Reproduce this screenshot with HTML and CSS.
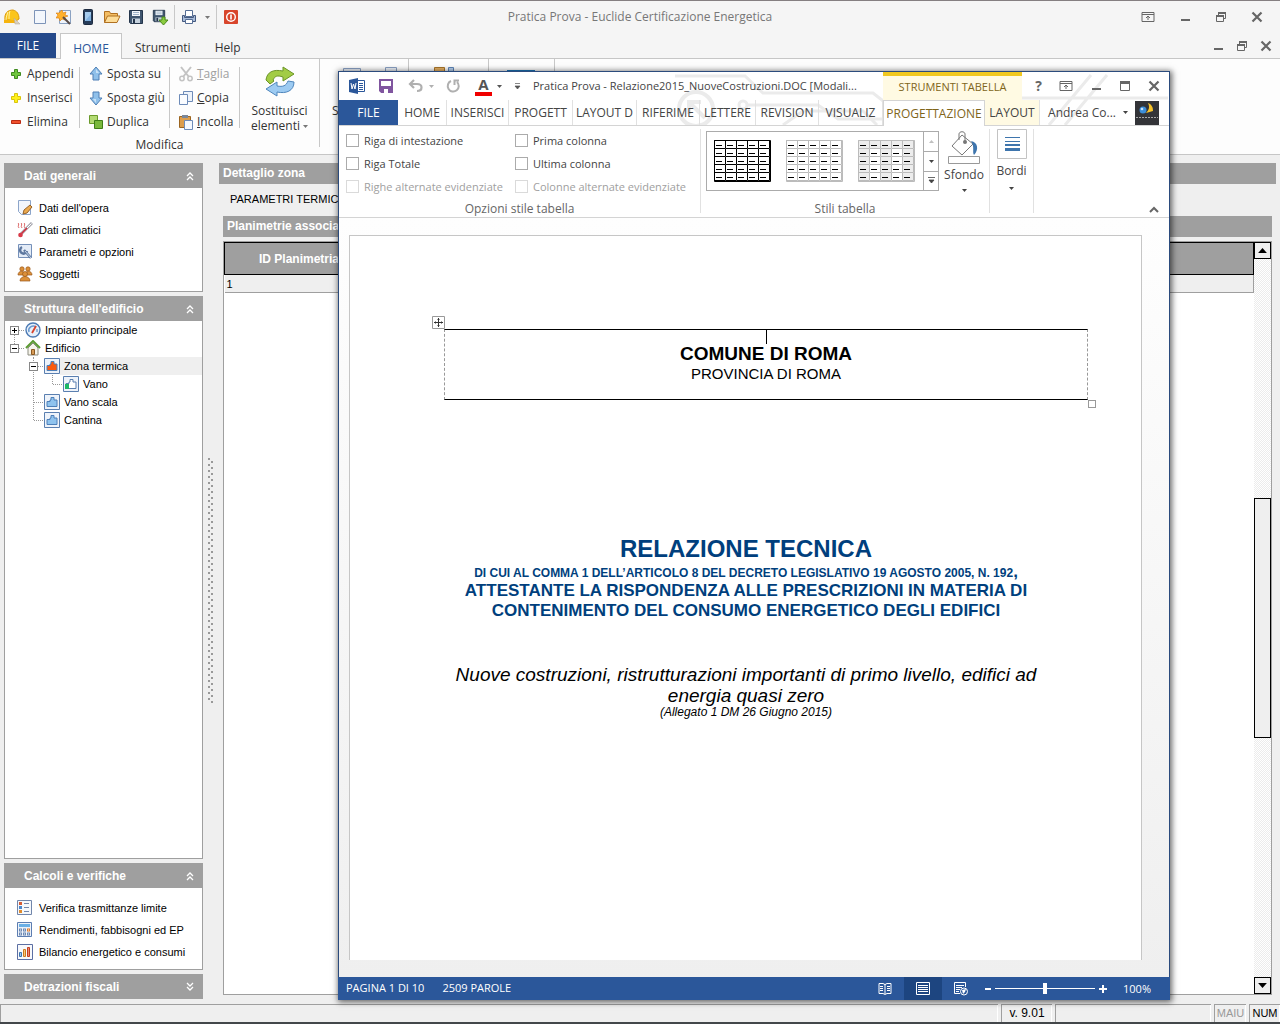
FILE: index.html
```html
<!DOCTYPE html>
<html lang="it">
<head>
<meta charset="UTF-8">
<title>Pratica Prova - Euclide Certificazione Energetica</title>
<meta name="viewport" content="width=device-width, initial-scale=1.0">
<link rel="stylesheet" href="styles.css">
</head>
<body>

<!-- simboli riutilizzati -->
<svg class="simboli" aria-hidden="true">
    <symbol id="giu" viewBox="0 0 7 4"><path d="M0 0h7L3.5 4z" fill="currentColor"/></symbol>
    <symbol id="su" viewBox="0 0 7 4"><path d="M0 4h7L3.5 0z" fill="currentColor"/></symbol>
    <symbol id="chiudi" viewBox="0 0 12 12"><path d="M1.5 1.5l9 9M10.5 1.5l-9 9" stroke="currentColor" stroke-width="2.2" fill="none"/></symbol>
    <symbol id="riduci" viewBox="0 0 12 12"><path d="M2 8h9v2H2z" fill="currentColor"/></symbol>
    <symbol id="ripristina" viewBox="0 0 12 12"><path d="M3.5 4V1.5h7v6H8M1.5 4.5h7v6h-7z" fill="none" stroke="currentColor"/><path d="M3 1h8v2H3zM1 4h8v2H1z" fill="currentColor"/></symbol>
    <symbol id="ingrandisci" viewBox="0 0 12 12"><path d="M1.5 1.5h9v9h-9z" fill="none" stroke="currentColor"/><path d="M1 1h10v3H1z" fill="currentColor"/></symbol>
    <symbol id="barra" viewBox="0 0 14 12"><path d="M1 1.5h12v9H1zM1 3.5h12M7 9V5M5 7l2-2 2 2" fill="none" stroke="currentColor"/></symbol>
    <symbol id="freccesu" viewBox="0 0 10 10"><path d="M2 5l3-3 3 3M2 9l3-3 3 3" fill="none" stroke="currentColor" stroke-width="1.3"/></symbol>
    <symbol id="freccegiu" viewBox="0 0 10 10"><path d="M2 1l3 3 3-3M2 5l3 3 3-3" fill="none" stroke="currentColor" stroke-width="1.3"/></symbol>
    <symbol id="croce" viewBox="0 0 12 12"><path d="M4.5 1.5h3v3h3v3h-3v3h-3v-3h-3v-3h3z" stroke="currentColor"/></symbol>
    <symbol id="freccia" viewBox="0 0 16 16"><path d="M8 1l6 7h-3v6H5V8H2z" fill="#8fc0ea" stroke="#4f7fb5"/><path d="M8 3l3 4H8z" fill="#c9e2f7"/></symbol>
    <symbol id="vano" viewBox="0 0 16 16"><path d="M.5.5h15v15H.5z" fill="#eef3fa" stroke="#5a7fb0"/><path d="M3 12.5V7.5h3V6h1V3.5h3V6h3v6.5z" fill="currentColor" stroke="#4d7fb8"/></symbol>
    <symbol id="floppy" viewBox="0 0 16 16"><path d="M1.5 1.5h13v13h-12l-1-1z" fill="#3f556f" stroke="#24354b"/><path d="M4 2h8v5H4z" fill="#f2f6fa"/><path d="M5 3.5h6M5 5.5h6" stroke="#9fb2c8"/><path d="M4 9.5h8V14H4z" fill="#c6d2de"/><path d="M5 10h2v4H5z" fill="#24354b"/></symbol>
    <pattern id="celle" width="11" height="8" patternUnits="userSpaceOnUse"><path d="M.5 8V.5H11" fill="none" stroke="#000"/><path d="M2 5.5h6" stroke="#000"/></pattern>
    <pattern id="celleGrigie" width="11" height="8" patternUnits="userSpaceOnUse"><path d="M.5 8V.5H11" fill="none" stroke="#bbb"/><path d="M2 5.5h6" stroke="#000"/></pattern>
</svg>

<header class="titolo">
    <div class="accesso">
        <svg class="casco" width="18" height="18" viewBox="0 0 18 18"><path d="M2 12C1 5 5 2 10 2c4 1 6 4 6 9l-3 2-8-1z" fill="#fbc51b" stroke="#dc9a0a"/><path d="M7 3c-1 3-1 5-1 8M5 4C4 7 3 9 3 12" stroke="#fff0a0" fill="none"/><path d="M1 12h10l2 3H1z" fill="#f6b40d"/><path d="M11 10l6 6h-5z" fill="#d8cfc0" stroke="#b5a995" stroke-width=".5"/></svg>
        <button aria-label="Nuovo"><svg width="16" height="16" viewBox="0 0 16 16"><path d="M2.5 1.5h11v13h-11z" fill="#f3f7fc" stroke="#7d94b8"/></svg></button>
        <button aria-label="Creazione guidata"><svg width="16" height="16" viewBox="0 0 16 16"><path d="M3.5 1.5h11v13h-11z" fill="#eff4fb" stroke="#8ba2c2"/><path d="M6 1l1 3 3-1-1 3 3 1-3 1 0 3-3-1-2 2-1-3-3 0 2-3-2-2 3 0z" fill="#ffb12c" stroke="#d97908" stroke-width=".6"/><path d="M7 8l7 7" stroke="#574b48" stroke-width="2"/></svg></button>
        <button aria-label="Dispositivo"><svg width="16" height="16" viewBox="0 0 16 16"><rect x="3.5" y=".5" width="9" height="15" rx="1" fill="#263c59" stroke="#1d2b40"/><path d="M5 3h6v9H5z" fill="#7fb0df"/><path d="M5 12l6-7V3H5z" fill="#a5cbed"/></svg></button>
        <button aria-label="Apri"><svg width="18" height="16" viewBox="0 0 18 16"><path d="M1.5 13.5v-11h5l1 2h7v3" fill="#f3bd63" stroke="#b07021"/><path d="M1.5 13.5l3-6.5H17l-3 6.5z" fill="#fddc97" stroke="#b07021"/></svg></button>
        <button aria-label="Salva"><svg width="16" height="16"><use href="#floppy"/></svg></button>
        <button aria-label="Salva con nome"><svg width="17" height="17" viewBox="0 0 17 17"><use href="#floppy" width="14" height="14"/><path d="M10 8h3v3h3l-4.5 5L7 11h3z" fill="#8bcb3f" stroke="#4a8a1c"/></svg></button>
        <span class="riga"></span>
        <button aria-label="Stampa"><svg width="16" height="16" viewBox="0 0 16 16"><path d="M4.5 1.5h7v6h-7z" fill="#fff" stroke="#556d94"/><path d="M1.5 6.5h2v2h9v-2h2v6h-13z" fill="#a8bbd8" stroke="#44597f"/><path d="M4.5 10.5h7v4h-7z" fill="#fff" stroke="#556d94"/></svg></button>
        <svg class="tendina" width="5" height="3"><use href="#giu"/></svg>
        <span class="riga"></span>
        <button aria-label="Esci"><svg width="16" height="16" viewBox="0 0 16 16"><rect x="1" y="1" width="14" height="14" rx="1" fill="#d8452b"/><circle cx="8" cy="8" r="4.3" fill="none" stroke="#fff" stroke-width="1.4"/><path d="M8 5.5v5" stroke="#fff" stroke-width="1.6"/></svg></button>
    </div>
    <h1>Pratica Prova - Euclide Certificazione Energetica</h1>
    <div class="comandi">
        <button aria-label="Opzioni barra"><svg width="14" height="12"><use href="#barra"/></svg></button>
        <button aria-label="Riduci a icona"><svg width="12" height="12"><use href="#riduci"/></svg></button>
        <button aria-label="Ripristina"><svg width="12" height="12"><use href="#ripristina"/></svg></button>
        <button aria-label="Chiudi"><svg width="12" height="12"><use href="#chiudi"/></svg></button>
    </div>
</header>

<nav class="schede">
    <button class="file">FILE</button>
    <button class="attiva">HOME</button>
    <button>Strumenti</button>
    <button>Help</button>
    <div class="comandi-mdi">
        <button aria-label="Riduci scheda"><svg width="12" height="12"><use href="#riduci"/></svg></button>
        <button aria-label="Ripristina scheda"><svg width="12" height="12"><use href="#ripristina"/></svg></button>
        <button aria-label="Chiudi scheda"><svg width="12" height="12"><use href="#chiudi"/></svg></button>
    </div>
</nav>

<section class="nastro">
    <div class="gruppo modifica">
        <div class="colonne">
            <div class="colonna">
                <button><svg class="verde" width="12" height="12"><use href="#croce"/></svg>Appendi</button>
                <button><svg class="giallo" width="12" height="12"><use href="#croce"/></svg>Inserisci</button>
                <button><svg width="12" height="12" viewBox="0 0 12 12"><path d="M1.5 4.5h9v3h-9z" fill="#f0502c" stroke="#b92a12"/></svg>Elimina</button>
            </div>
            <div class="colonna">
                <button><svg width="16" height="16"><use href="#freccia"/></svg>Sposta su</button>
                <button><svg class="capovolta" width="16" height="16"><use href="#freccia"/></svg>Sposta giù</button>
                <button><svg width="16" height="16" viewBox="0 0 16 16"><path d="M1.5 1.5h8v8h-8z" fill="#b3da73" stroke="#6a9a2b"/><path d="M6.5 6.5h8v8h-8z" fill="#79b83c" stroke="#3f7d17"/></svg>Duplica</button>
            </div>
            <div class="colonna">
                <button disabled><svg width="16" height="16" viewBox="0 0 16 16"><path d="M3 1l8 10M13 1L5 11" stroke="#c3c3c3" stroke-width="2"/><circle cx="4" cy="12.5" r="2.2" fill="none" stroke="#c3c3c3" stroke-width="1.5"/><circle cx="12" cy="12.5" r="2.2" fill="none" stroke="#c3c3c3" stroke-width="1.5"/></svg><span><u>T</u>aglia</span></button>
                <button><svg width="16" height="16" viewBox="0 0 16 16"><path d="M5.5 1.5h9v10h-9z" fill="#edf3fb" stroke="#6d8bb8"/><path d="M1.5 4.5h8v10h-8z" fill="#fafcff" stroke="#6d8bb8"/></svg><span><u>C</u>opia</span></button>
                <button><svg width="16" height="16" viewBox="0 0 16 16"><path d="M1.5 2.5h11v11h-11z" fill="#dc9d4c" stroke="#9b6420"/><path d="M4 1h6v3H4z" fill="#7b8798"/><path d="M6.5 6.5h8v9h-8z" fill="#f4f8fd" stroke="#6d8bb8"/></svg><span><u>I</u>ncolla</span></button>
            </div>
            <button class="grande">
                <svg width="32" height="32" viewBox="0 0 32 32"><path d="M2 14C3 6 9 3 19 5V1l11 7-11 7v-4c-6-2-8-1-10 3l1 1-4 3z" fill="#a2cc45" stroke="#6b9427"/><path d="M30 16c0 9-8 12-17 10v4L2 23l11-7v4c6 1 9 0 11-5z" fill="#9dcbf2" stroke="#4f86bc"/></svg>
                <span>Sostituisci<br>elementi <svg width="5" height="3"><use href="#giu"/></svg></span>
            </button>
        </div>
        <h2>Modifica</h2>
    </div>
    <div class="gruppo secondo">
        <button class="grande" aria-label="Strumento"><svg width="56" height="32" viewBox="0 0 56 32"><path d="M1.5 2.5h17v20h-17zM43.5 1.5h11v20h-11z" fill="#eef3fa" stroke="#8aa1c4"/></svg><span>S</span></button>
    </div>
    <div class="gruppo terzo"><svg width="24" height="24" viewBox="0 0 24 24"><path d="M1.5 3.5h10v16h-10z" fill="#e9b261" stroke="#a8752a"/><path d="M15.5 3.5h5v16h-5z" fill="#b8d2f0" stroke="#5f86b8"/></svg></div>
    <div class="gruppo quarto"><svg width="28" height="24" viewBox="0 0 28 24"><path d="M0 6h28v16H0z" fill="#1c79c0"/></svg></div>
</section>

<main>
    <aside class="laterale">
        <section class="pannello">
            <h2>Dati generali <svg width="10" height="10"><use href="#freccesu"/></svg></h2>
            <ul class="voci">
                <li><a href="#"><svg width="16" height="16" viewBox="0 0 16 16"><path d="M1.5.5h12v14h-9l-3-3z" fill="#f2f6fc" stroke="#8ca5ca"/><path d="M6 14l1-4 6-5 2 2-5 6z" fill="#eaa94e" stroke="#96622a"/></svg>Dati dell'opera</a></li>
                <li><a href="#"><svg width="16" height="16" viewBox="0 0 16 16"><path d="M1 1c2 1-1 3 1 5M4 1c2 1-1 3 1 5M7 1c2 1-1 3 1 5" fill="none" stroke="#dc6868"/><path d="M15 1L4 12" stroke="#a8a8b0" stroke-width="3"/><path d="M14.5 1.5L5 11" stroke="#fff"/><path d="M10 6l-6 6" stroke="#d22c3a" stroke-width="1.5"/><circle cx="3.5" cy="13" r="2.3" fill="#d83a48"/></svg>Dati climatici</a></li>
                <li><a href="#"><svg width="16" height="16" viewBox="0 0 16 16"><path d="M1.5.5h13v13h-13z" fill="#e4ecf7" stroke="#7590b9"/><path d="M5 3a3.5 3.5 0 1 0 5 4M7 6l7 8" stroke="#5d779f" stroke-width="2.5" fill="none"/><path d="M8 7l6 7" stroke="#c5d5ea"/></svg>Parametri e opzioni</a></li>
                <li><a href="#"><svg width="16" height="16" viewBox="0 0 16 16"><g fill="#dc9039" stroke="#9a581b" stroke-width=".7"><circle cx="5" cy="3" r="2.2"/><circle cx="11" cy="3" r="2.2"/><path d="M1 9c0-5 7-5 7 0zM8 9c0-5 7-5 7 0z"/><circle cx="8" cy="8" r="2.5"/><path d="M3 15c0-6 10-6 10 0z"/></g></svg>Soggetti</a></li>
            </ul>
        </section>

        <section class="pannello struttura">
            <h2>Struttura dell'edificio <svg width="10" height="10"><use href="#freccesu"/></svg></h2>
            <ul class="albero">
                <li>
                    <div class="nodo"><button aria-label="Espandi"><svg width="7" height="7"><path d="M1 3.5h5M3.5 1v5" stroke="#000"/></svg></button><svg width="16" height="16" viewBox="0 0 16 16"><circle cx="8" cy="8" r="7" fill="#e6f0fb" stroke="#4c7ab4" stroke-width="1.4"/><path d="M4 10a4.5 4.5 0 0 1 7-5" stroke="#6d9bd0" stroke-width="1.5" fill="none"/><path d="M11 4L7 11" stroke="#d8432c" stroke-width="1.8"/><path d="M12 7v3" stroke="#4c7ab4"/></svg><span>Impianto principale</span></div>
                </li>
                <li>
                    <div class="nodo"><button aria-label="Comprimi"><svg width="7" height="7"><path d="M1 3.5h5" stroke="#000"/></svg></button><svg width="16" height="16" viewBox="0 0 16 16"><path d="M3 8l5-5 5 5v7H3z" fill="#f6f4ea" stroke="#8c8c80"/><path d="M1 8l7-7 7 7" fill="none" stroke="#5b9a32" stroke-width="2"/><path d="M6.5 9.5h3v5h-3z" fill="#d79a55" stroke="#8a5a24"/></svg><span>Edificio</span></div>
                    <ul>
                        <li>
                            <div class="nodo scelto"><button aria-label="Comprimi"><svg width="7" height="7"><path d="M1 3.5h5" stroke="#000"/></svg></button><svg class="rosso" width="16" height="16"><use href="#vano"/></svg><span>Zona termica</span></div>
                            <ul>
                                <li><div class="nodo"><i></i><svg width="16" height="16" viewBox="0 0 16 16"><path d="M.5.5h15v15H.5z" fill="#eef3fa" stroke="#5a7fb0"/><path d="M3 12.5V7.5h3V6h1V3.5h3V6h3v6.5z" fill="#fff" stroke="#5a7fb0"/><path d="M2 8h4v5H2z" fill="#1db867"/></svg><span>Vano</span></div></li>
                            </ul>
                        </li>
                        <li><div class="nodo"><i></i><svg class="azzurro" width="16" height="16"><use href="#vano"/></svg><span>Vano scala</span></div></li>
                        <li><div class="nodo"><i></i><svg class="azzurro" width="16" height="16"><use href="#vano"/></svg><span>Cantina</span></div></li>
                    </ul>
                </li>
            </ul>
        </section>

        <section class="pannello">
            <h2>Calcoli e verifiche <svg width="10" height="10"><use href="#freccesu"/></svg></h2>
            <ul class="voci">
                <li><a href="#"><svg width="16" height="16" viewBox="0 0 16 16"><path d="M.5.5h14v14H.5z" fill="#f5f8fc" stroke="#7186ab"/><path d="M2 2h3v3H2z" fill="#d45b35"/><path d="M2 6h3v3H2z" fill="#4a88cc"/><path d="M2 10h3v3H2z" fill="#e08b2c"/><path d="M7 3.5h5M7 7.5h5M7 11.5h5" stroke="#7186ab"/></svg>Verifica trasmittanze limite</a></li>
                <li><a href="#"><svg width="16" height="16" viewBox="0 0 16 16"><path d="M.5.5h14v14H.5z" fill="#eef3fa" stroke="#5c7db1"/><path d="M2 2h11v3H2z" fill="#6bb0e6"/><path d="M2 8h3M6 8h3M2 12h3M6 12h3M10 12h3" stroke="#6c89b4" stroke-width="3"/><path d="M10 8h3" stroke="#e07b2c" stroke-width="3"/><path d="M3 8h1M7 8h1M11 8h1M3 12h1M7 12h1M11 12h1" stroke="#fff"/></svg>Rendimenti, fabbisogni ed EP</a></li>
                <li><a href="#"><svg width="16" height="16" viewBox="0 0 16 16"><path d="M.5.5h15v15H.5z" fill="#f7f9fc" stroke="#5c6fa3"/><path d="M2.5 8.5h2v4h-2z" fill="#9cc9ef" stroke="#3f74b0"/><path d="M6.5 5.5h2v7h-2z" fill="#f9c679" stroke="#cb7a1e"/><path d="M10.5 3.5h2v9h-2z" fill="#f08a6a" stroke="#c23d22"/></svg>Bilancio energetico e consumi</a></li>
            </ul>
        </section>

        <section class="pannello chiuso">
            <h2>Detrazioni fiscali <svg width="10" height="10"><use href="#freccegiu"/></svg></h2>
        </section>
    </aside>

    <div class="divisore"></div>

    <section class="dettaglio">
        <h2>Dettaglio zona</h2>
        <p>PARAMETRI TERMICI</p>
        <h3>Planimetrie associate</h3>
        <div class="griglia">
            <div class="dati">
                <table>
                    <thead><tr><th>ID Planimetria</th></tr></thead>
                    <tbody><tr><td>1</td></tr></tbody>
                </table>
            </div>
            <div class="scorrimento">
                <button aria-label="Scorri su"><svg width="9" height="5"><use href="#su"/></svg></button>
                <div class="cursore"></div>
                <button aria-label="Scorri giù"><svg width="9" height="5"><use href="#giu"/></svg></button>
            </div>
        </div>
    </section>
</main>

<footer class="stato">
    <span class="vuoto"></span>
    <span class="versione">v. 9.01</span>
    <span class="spazio"></span>
    <span class="maiu">MAIU</span>
    <span class="num">NUM</span>
</footer>

<!-- finestra del documento -->
<div class="word">
    <svg class="decoro" width="500" height="54" viewBox="0 0 500 54" fill="none" stroke="#ebebeb" stroke-width="3"><circle cx="27" cy="37" r="17" stroke-width="4"/><path d="M36 46L20 30M20 42V30h12" stroke-width="4"/><path d="M6 4h70l18 17h110l14 11M79 33h70l20 14h60"/><circle cx="74" cy="33" r="4"/><path d="M114 53l20-14h60l14 14M285 53l24-27h190M380 53l42-50M396 53l42-50"/></svg>

    <div class="word-titolo">
        <svg width="16" height="16" viewBox="0 0 16 16"><path d="M8.5 2.5h7v11h-7z" fill="#fff" stroke="#2b579a"/><path d="M10 5.5h4M10 7.5h4M10 9.5h4M10 11.5h4" stroke="#2b579a"/><path d="M0 2l9-2v16l-9-2z" fill="#2b579a"/><path d="M2 5l1 6 1.5-5L6 11l1-6" stroke="#fff" fill="none"/></svg>
        <button aria-label="Salva documento"><svg width="14" height="14" viewBox="0 0 14 14"><path d="M1 1h12v12H2.5L1 11.5z" fill="#fff" stroke="#80559f" stroke-width="2"/><path d="M1 7h12v6H1z" fill="#80559f"/><path d="M5 10h4v4H5z" fill="#fff"/></svg></button>
        <button class="spento" aria-label="Annulla"><svg width="16" height="14" viewBox="0 0 16 14"><path d="M6 1L2 5l4 4M2 5h7c6 0 6 7 0 7" fill="none" stroke="currentColor" stroke-width="2.2"/></svg></button>
        <svg class="spento" width="5" height="3"><use href="#giu"/></svg>
        <button class="spento" aria-label="Ripeti"><svg width="14" height="14" viewBox="0 0 14 14"><path d="M5 2a5.5 5.5 0 1 0 6 1M13 1.5H8.5V6" fill="none" stroke="currentColor" stroke-width="2"/></svg></button>
        <button class="colore" aria-label="Colore carattere"><span>A</span></button>
        <svg width="5" height="3"><use href="#giu"/></svg>
        <button class="altro" aria-label="Personalizza"><svg width="7" height="7" viewBox="0 0 7 7"><path d="M1 .5h5M1 3h5L3.5 6z" stroke="currentColor" fill="currentColor" stroke-width=".7"/></svg></button>
        <span class="nome">Pratica Prova - Relazione2015_NuoveCostruzioni.DOC [Modali...</span>
        <span class="contesto">STRUMENTI TABELLA</span>
        <div class="word-comandi">
            <button class="aiuto" aria-label="Guida">?</button>
            <button aria-label="Opzioni nastro"><svg width="14" height="12"><use href="#barra"/></svg></button>
            <button aria-label="Riduci documento"><svg width="12" height="12"><use href="#riduci"/></svg></button>
            <button aria-label="Ingrandisci documento"><svg width="12" height="12"><use href="#ingrandisci"/></svg></button>
            <button aria-label="Chiudi documento"><svg width="12" height="12"><use href="#chiudi"/></svg></button>
        </div>
    </div>

    <div class="word-schede">
        <button class="file">FILE</button>
        <button>HOME</button>
        <button>INSERISCI</button>
        <button>PROGETT</button>
        <button>LAYOUT D</button>
        <button>RIFERIME</button>
        <button>LETTERE</button>
        <button>REVISION</button>
        <button>VISUALIZ</button>
        <button class="attiva">PROGETTAZIONE</button>
        <button class="tabella">LAYOUT</button>
        <div class="utente">
            Andrea Co...
            <svg width="5" height="3"><use href="#giu"/></svg>
            <svg width="24" height="24" viewBox="0 0 24 24"><path d="M0 0h24v24H0z" fill="#333438"/><circle cx="8" cy="9" r="3.5" fill="#3d8ed8"/><circle cx="7" cy="8" r="1.3" fill="#c6e2fa"/><path d="M13 2c5 2 5 6 5 8l-7 2c3-3 4-6 2-10z" fill="#f8c42c"/><path d="M1 16.5h22" stroke="#aaa" stroke-dasharray="2 1"/></svg>
        </div>
    </div>

    <div class="word-nastro">
        <div class="opzioni">
            <div class="caselle">
                <label><input type="checkbox"> Riga di intestazione</label>
                <label><input type="checkbox"> Prima colonna</label>
                <label><input type="checkbox"> Riga Totale</label>
                <label><input type="checkbox"> Ultima colonna</label>
                <label class="spenta"><input type="checkbox" disabled> Righe alternate evidenziate</label>
                <label class="spenta"><input type="checkbox" disabled> Colonne alternate evidenziate</label>
            </div>
            <h2>Opzioni stile tabella</h2>
        </div>
        <div class="stili">
            <div class="stili-riga">
                <div class="galleria">
                    <svg width="57" height="42"><rect width="56" height="41" fill="url(#celle)"/><path d="M.5.5h56v41H.5z" fill="none" stroke="#000"/></svg>
                    <svg width="57" height="42"><rect width="56" height="41" fill="url(#celleGrigie)"/><path d="M.5.5h56v41H.5z" fill="none" stroke="#bbb"/></svg>
                    <svg width="57" height="42"><path d="M0 0h57v8H0zM0 8h11v34H0zM22 8h11v34H22zM44 8h12v34H44z" fill="#ededed"/><rect width="56" height="41" fill="url(#celleGrigie)"/><path d="M.5.5h56v41H.5z" fill="none" stroke="#bbb"/></svg>
                    <div class="freccette">
                        <button disabled aria-label="Riga precedente"><svg width="5" height="3"><use href="#su"/></svg></button>
                        <button aria-label="Riga successiva"><svg width="5" height="3"><use href="#giu"/></svg></button>
                        <button aria-label="Altri stili"><svg width="7" height="7" viewBox="0 0 7 7"><path d="M0 .5h7M1 3h5L3.5 6z" stroke="currentColor" fill="currentColor" stroke-width=".8"/></svg></button>
                    </div>
                </div>
                <button class="sfondo">
                    <svg width="34" height="34" viewBox="0 0 34 34"><path d="M15 4L5 15l10 9 11-11z" fill="#fff" stroke="#777"/><path d="M12 9V3c0-3 6-3 6 0v8" fill="none" stroke="#777"/><circle cx="18" cy="11" r="2" fill="#777"/><path d="M24 10c7 1 8 9 3 14-2-3 1-8-3-14z" fill="#3e75ad"/><path d="M1.5 25.5h31v7h-31z" fill="#fff" stroke="#999"/></svg>
                    Sfondo
                    <svg width="5" height="3"><use href="#giu"/></svg>
                </button>
            </div>
            <h2>Stili tabella</h2>
        </div>
        <button class="bordi">
            <svg width="30" height="30" viewBox="0 0 30 30"><path d="M.5.5h29v29H.5z" fill="#fff" stroke="#c3c3c3"/><path d="M8 8.5h15M8 12.5h15" stroke="#3e75ad"/><path d="M8 16h15" stroke="#3e75ad" stroke-width="2"/><path d="M8 20.5h15" stroke="#3e75ad" stroke-width="3"/></svg>
            Bordi
            <svg width="5" height="3"><use href="#giu"/></svg>
        </button>
        <button class="comprimi" aria-label="Comprimi nastro"><svg width="10" height="7" viewBox="0 0 10 7"><path d="M1 6l4-4 4 4" fill="none" stroke="currentColor" stroke-width="2"/></svg></button>
    </div>

    <div class="area">
        <article class="foglio">
            <div class="riquadro">
                <svg class="sposta" width="13" height="13" viewBox="0 0 13 13"><path d="M.5.5h12v12H.5z" fill="#fff" stroke="#999"/><path d="M6.5 2v9M2 6.5h9M5.5 3.5h2M5.5 9.5h2M3.5 5.5v2M9.5 5.5v2" stroke="#333"/></svg>
                <span class="cursore-testo"></span>
                <strong>COMUNE DI ROMA</strong>
                <span>PROVINCIA DI ROMA</span>
                <span class="maniglia"></span>
            </div>
            <div class="testo">
                <h1>RELAZIONE TECNICA</h1>
                <p class="decreto">DI CUI AL COMMA 1 DELL’ARTICOLO 8 DEL DECRETO LEGISLATIVO 19 AGOSTO 2005, N. 192<b>,</b></p>
                <p class="attestante">ATTESTANTE LA RISPONDENZA ALLE PRESCRIZIONI IN MATERIA DI<br>CONTENIMENTO DEL CONSUMO ENERGETICO DEGLI EDIFICI</p>
                <p class="nuove">Nuove costruzioni, ristrutturazioni importanti di primo livello, edifici ad<br>energia quasi zero</p>
                <p class="allegato">(Allegato 1 DM 26 Giugno 2015)</p>
            </div>
        </article>
    </div>

    <div class="word-stato">
        <span>PAGINA 1 DI 10</span>
        <span>2509 PAROLE</span>
        <div class="viste">
            <button aria-label="Lettura"><svg width="14" height="14" viewBox="0 0 14 14"><path d="M1 1.5h4l2 1 2-1h4v10H9l-2 1-2-1H1zM7 2v10M2 4.5h3M2 6.5h3M2 8.5h3M9 4.5h3M9 6.5h3M9 8.5h3" fill="none" stroke="#fff"/></svg></button>
            <button class="attiva" aria-label="Layout di stampa"><svg width="14" height="14" viewBox="0 0 14 14"><path d="M.5.5h13v12H.5zM2 3.5h10M2 5.5h10M2 7.5h10M2 9.5h10" fill="none" stroke="#fff"/></svg></button>
            <button aria-label="Layout Web"><svg width="14" height="14" viewBox="0 0 14 14"><path d="M6 11.5H.5V.5h11V5M2 3.5h8M2 5.5h6M2 7.5h4M2 9.5h3" fill="none" stroke="#fff"/><circle cx="10" cy="9.5" r="3.5" fill="#2b579a" stroke="#fff"/><path d="M8 8l4-1-1 3-2 2z" fill="#fff"/></svg></button>
        </div>
        <div class="zoom">
            <button aria-label="Zoom indietro"><svg width="8" height="8" viewBox="0 0 8 8"><path d="M1 4h6" stroke="#fff" stroke-width="2"/></svg></button>
            <input type="range" aria-label="Zoom" min="0" max="100" value="50">
            <button aria-label="Zoom avanti"><svg width="8" height="8" viewBox="0 0 8 8"><path d="M0 4h8M4 0v8" stroke="#fff" stroke-width="2"/></svg></button>
            <span>100%</span>
        </div>
    </div>
</div>

</body>
</html>
```

FILE: styles.css
```css
* {
    box-sizing: border-box;
}
body {
    margin: 0;
    height: 100vh;
    position: relative;
    display: flex;
    flex-direction: column;
    overflow: hidden;
    background: #efefef;
    color: #333;
    font-family: "Open Sans", "Noto Sans", sans-serif;
    font-size: 12px;
    line-height: 16px;
}
h1, h2, h3, p, ul {
    margin: 0;
    padding: 0;
    font-size: inherit;
    font-weight: normal;
}
ul {
    list-style: none;
}
button {
    padding: 0;
    border: none;
    background: none;
    color: inherit;
    font: inherit;
    display: flex;
    align-items: center;
    justify-content: center;
    white-space: nowrap;
}
svg {
    flex: none;
}
.simboli {
    position: absolute;
    width: 0;
    height: 0;
}

/* barra del titolo */
.titolo {
    height: 33px;
    flex: none;
    border-top: 1px solid #857f81;
    background: #f5f5f5;
    display: grid;
    grid-template-columns: 1fr auto 1fr;
    align-items: center;
}
.titolo h1 {
    color: #777;
}
.accesso {
    display: flex;
    align-items: center;
    gap: 8px;
    padding-left: 3px;
}
.accesso button {
    width: 16px;
}
.casco {
    margin-right: 3px;
}
.riga {
    width: 1px;
    height: 24px;
    background: #c8c8c8;
    margin: 0 -2px;
}
.tendina {
    color: #777;
}
.comandi {
    display: flex;
    justify-content: flex-end;
    gap: 24px;
    padding-right: 17px;
    color: #666;
}

/* schede */
.schede {
    height: 26px;
    flex: none;
    background: #f5f5f5;
    border-bottom: 1px solid #c6c6c6;
    display: flex;
    align-items: stretch;
}
.schede > button {
    padding: 4px 16px 0;
}
.schede > .file {
    width: 56px;
    padding: 0;
    margin-right: 4px;
    background: #24498a;
    color: #fff;
}
.schede > .attiva {
    width: 62px;
    padding: 4px 0 0;
    margin-bottom: -1px;
    border: 1px solid #c6c6c6;
    border-bottom: none;
    background: #fdfdfd;
    color: #2b579a;
}
.schede > .attiva + button {
    padding: 4px 8px 0 13px;
}
.comandi-mdi {
    margin-left: auto;
    display: flex;
    align-items: center;
    gap: 12px;
    padding-right: 8px;
    color: #666;
}

/* nastro */
.nastro {
    height: 96px;
    flex: none;
    display: flex;
    background: #fdfdfd;
    border-bottom: 1px solid #c6c6c6;
}
.gruppo {
    height: 88px;
    border-right: 1px solid #c8c8c8;
}
.modifica {
    width: 320px;
}
.modifica h2 {
    text-align: center;
    padding-top: 2px;
}
.colonne {
    height: 76px;
    padding-top: 3px;
    display: flex;
    align-items: flex-start;
}
.colonna {
    height: 72px;
    position: relative;
    display: flex;
    flex-direction: column;
    align-items: flex-start;
}
.colonna:nth-child(1) {
    width: 80px;
    padding-left: 10px;
}
.colonna:nth-child(2) {
    width: 90px;
    padding-left: 8px;
}
.colonna:nth-child(3) {
    width: 70px;
    padding-left: 8px;
}
.colonna::after {
    content: "";
    position: absolute;
    right: 0;
    top: 5px;
    bottom: 6px;
    width: 1px;
    background: #c8c8c8;
}
.colonna button {
    height: 24px;
    gap: 3px;
}
.colonna:nth-child(1) button {
    gap: 5px;
}
.colonna button:disabled {
    color: #a0a0a0;
}
.verde {
    color: #3f8a1f;
    fill: #6fc63d;
}
.giallo {
    color: #d8c40c;
    fill: #fff01a;
}
.capovolta {
    transform: rotate(180deg);
}
.grande {
    flex-direction: column;
    line-height: 15px;
    gap: 5px;
}
.colonne .grande {
    flex: 1;
    padding-top: 4px;
}
.grande span svg {
    vertical-align: middle;
    color: #777;
}
.secondo {
    width: 89px;
    padding: 7px 0 0 12px;
}
.secondo .grande {
    align-items: flex-start;
}
.secondo .grande svg {
    margin-left: 10px;
}
.terzo {
    width: 80px;
    padding: 5px 0 0 24px;
}
.quarto {
    width: 66px;
    padding: 5px 0 0 18px;
}

/* area principale */
main {
    flex: 1;
    min-height: 0;
    display: flex;
    padding: 8px 4px 5px;
    color: #000;
    font-family: "Liberation Sans", Arial, sans-serif;
    font-size: 11px;
}
.laterale {
    width: 199px;
    flex: none;
    display: flex;
    flex-direction: column;
    gap: 4px;
}
.pannello {
    border: 1px solid #9f9f9f;
    background: #fff;
}
.pannello h2 {
    height: 24px;
    padding: 0 7px 0 19px;
    display: flex;
    align-items: center;
    justify-content: space-between;
    background: #9f9f9f;
    color: #fff;
    font-size: 12px;
    font-weight: bold;
}
.chiuso h2 {
    height: 23px;
}
.struttura {
    flex: 1;
}
.voci {
    padding: 9px 12px 6px;
}
.voci a {
    height: 22px;
    display: flex;
    align-items: center;
    gap: 6px;
    color: #000;
    text-decoration: none;
    white-space: nowrap;
}

/* albero */
.albero ul {
    padding-left: 19px;
}
.albero li {
    position: relative;
}
.albero li:not(:last-child)::before,
.albero ul > li::before {
    content: "";
    position: absolute;
    left: 9px;
    top: 0;
    height: 100%;
    border-left: 1px dotted #999;
}
.albero > li:first-child::before {
    top: 9px;
}
.albero ul > li:last-child::before {
    height: 9px;
}
.nodo {
    height: 18px;
    position: relative;
    display: flex;
    align-items: center;
}
.nodo::before {
    content: "";
    position: absolute;
    left: 10px;
    top: 9px;
    width: 9px;
    border-top: 1px dotted #999;
}
.nodo button {
    width: 9px;
    height: 9px;
    margin: 0 6px 0 5px;
    position: relative;
    border: 1px solid #888;
    background: #fff;
}
.nodo i {
    width: 20px;
}
.nodo span {
    flex: 1;
    line-height: 18px;
    padding-left: 4px;
}
.scelto span {
    background: #efefef;
}
.rosso {
    color: #fb5a0e;
}
.azzurro {
    color: #8fc3ee;
}

.divisore {
    width: 16px;
    flex: none;
    position: relative;
}
.divisore::after {
    content: "";
    position: absolute;
    left: 5px;
    top: 295px;
    width: 5px;
    height: 246px;
    background-image:
        conic-gradient(from 0deg at 2px 2px, transparent 75%, #999 0),
        conic-gradient(from 0deg at 2px 2px, transparent 75%, #999 0);
    background-size: 6px 6px;
    background-position: 0 0, 3px 3px;
}

/* dettaglio */
.dettaglio {
    flex: 1;
    min-width: 0;
    display: flex;
    flex-direction: column;
}
.dettaglio h2, .dettaglio h3 {
    height: 21px;
    padding-left: 4px;
    background: #9f9f9f;
    color: #fff;
    font-size: 12px;
    font-weight: bold;
    line-height: 21px;
}
.dettaglio p {
    padding: 7px 11px 9px;
}
.dettaglio h3 {
    margin: 0 4px 4px;
}
.griglia {
    flex: 1;
    margin: 0 4px 4px;
    border: 1px solid #9f9f9f;
    background: #fff;
    display: flex;
}
.dati {
    flex: 1;
}
.dati table {
    width: 100%;
    border-collapse: collapse;
}
.dati th {
    height: 32px;
    padding: 0 0 0 34px;
    border: 1px solid #000;
    background: #9f9f9f;
    color: #fff;
    font-size: 12px;
    text-align: left;
}
.dati td {
    height: 18px;
    padding: 0 2px;
    background: #efefef;
    border-right: 1px solid #9f9f9f;
    border-bottom: 1px solid #9f9f9f;
}
.scorrimento {
    width: 17px;
    display: grid;
    grid-template-rows: 17px 1fr 1fr 1fr 17px;
    background: repeating-conic-gradient(#ececec 0 25%, #fff 0 50%) 0 0 / 2px 2px;
}
.scorrimento button, .cursore {
    border: 1px solid #000;
    background: #efefef;
}
.scorrimento button:last-child {
    grid-row: 5;
}
.cursore {
    grid-row: 3;
}

/* barra di stato */
.stato {
    height: 20px;
    flex: none;
    display: flex;
    gap: 3px;
    border-bottom: 2px solid #43474a;
    color: #000;
    font: 12px/17px "Liberation Sans", Arial, sans-serif;
}
.stato span {
    border: 1px solid #9f9f9f;
    border-right: none;
    border-bottom: none;
    text-align: center;
    box-shadow: inset -1px 0 #fff;
}
.stato .vuoto {
    flex: 1;
}
.stato .versione {
    width: 51px;
}
.stato .spazio {
    width: 156px;
}
.stato .maiu {
    width: 32px;
    color: #999;
    font-size: 11px;
}
.stato .num {
    width: 31px;
    font-size: 11px;
}

/* finestra word */
.word {
    position: absolute;
    left: 338px;
    right: 110px;
    top: 71px;
    bottom: 24px;
    display: flex;
    flex-direction: column;
    border: 1px solid #2b4b7d;
    background: #fff;
    box-shadow: 1px 1px 6px 1px rgba(0,0,0,0.6);
    color: #444;
}
.decoro {
    position: absolute;
    right: 0;
    top: 0;
}
.word-titolo {
    height: 28px;
    flex: none;
    position: relative;
    display: flex;
    align-items: center;
    padding-left: 10px;
    color: #555;
}
.word-titolo > svg:first-child {
    margin-right: 10px;
}
.word-titolo > button + button {
    margin-left: 15px;
}
.word-titolo > button + svg {
    margin: 0 8px 0 5px;
}
.word-titolo svg + button {
    margin-left: 4px;
}
.word-titolo .colore {
    height: 19px;
    width: 17px;
    border-bottom: 4px solid #f00000;
    font-weight: bold;
    font-size: 15px;
    line-height: 14px;
    align-items: flex-start;
}
.word-titolo .spento {
    color: #b0b0b0;
}
.nome {
    flex: 1;
    padding-left: 12px;
    white-space: nowrap;
    color: #444;
    font-size: 11px;
}
.contesto {
    width: 139px;
    height: 28px;
    line-height: 22px;
    border-top: 4px solid #f1c81f;
    background: #fffae3;
    color: #80651a;
    text-align: center;
    font-size: 11px;
}
.word-comandi {
    width: 147px;
    display: flex;
    align-items: center;
    justify-content: flex-end;
    gap: 17px;
    padding-right: 9px;
    color: #666;
}
.aiuto {
    font-weight: bold;
    font-size: 14px;
}

.word-schede {
    height: 26px;
    flex: none;
    position: relative;
    display: grid;
    grid-template-columns: 59px 49px 62px 64px 64px 63px 56px 63px 64px 102px 55px 1fr;
    border-bottom: 1px solid #d4d4d4;
}
.word-schede > button {
    border-right: 1px solid #e1e1e1;
}
.word-schede .file {
    background: #2b579a;
    color: #fff;
    border: none;
}
.word-schede > .attiva {
    border: 1px solid #d4d4d4;
    border-bottom: none;
    margin-bottom: -1px;
    background: #fff;
    color: #80651a;
}
.word-schede > .tabella {
    background: #fffae3;
}
.utente {
    display: flex;
    align-items: center;
    justify-content: flex-end;
    gap: 7px;
    padding-right: 10px;
    white-space: nowrap;
}

.word-nastro {
    height: 92px;
    flex: none;
    position: relative;
    display: flex;
    padding-top: 3px;
    border-bottom: 1px solid #d4d4d4;
    background: #fff;
}
.word-nastro > * {
    height: 84px;
}
.word-nastro h2 {
    color: #666;
    text-align: center;
}
.opzioni {
    width: 362px;
    border-right: 1px solid #e1e1e1;
}
.caselle {
    height: 72px;
    padding-left: 7px;
    display: grid;
    grid-template-columns: 169px 1fr;
    grid-auto-rows: 23px;
    font-size: 11px;
}
.caselle label {
    display: flex;
    align-items: center;
    gap: 5px;
    white-space: nowrap;
}
.caselle input {
    appearance: none;
    width: 13px;
    height: 13px;
    margin: 0;
    border: 1px solid #ababab;
    background: #fff;
}
.caselle .spenta {
    color: #a0a0a0;
}
.caselle input:disabled {
    border-color: #dadada;
}
.stili {
    width: 289px;
    border-right: 1px solid #e1e1e1;
}
.stili-riga {
    height: 72px;
    padding: 2px 0 0 5px;
    display: flex;
    align-items: flex-start;
    justify-content: space-between;
}
.galleria {
    width: 233px;
    height: 60px;
    padding-left: 7px;
    border: 1px solid #ababab;
    display: flex;
    align-items: center;
}
.galleria > svg + svg {
    margin-left: 15px;
}
.freccette {
    width: 15px;
    flex: none;
    margin-left: auto;
    align-self: stretch;
    display: grid;
    grid-template-rows: 1fr 1fr 1fr;
    border-left: 1px solid #ababab;
}
.freccette button + button {
    border-top: 1px solid #ababab;
}
.freccette button:disabled {
    color: #c0c0c0;
}
.sfondo, .bordi {
    flex-direction: column;
    justify-content: flex-start;
}
.sfondo {
    width: 50px;
    line-height: 20px;
}
.sfondo svg:last-child, .bordi svg:last-child {
    margin-top: 4px;
}
.bordi {
    width: 44px;
    line-height: 24px;
    border-right: 1px solid #e1e1e1;
}
.comprimi {
    margin-left: auto;
    padding: 0 10px 0 0;
    align-items: flex-end;
    color: #666;
}

/* documento */
.area {
    flex: 1;
    min-height: 0;
    display: flex;
    padding: 17px 27px 17px 10px;
    background: linear-gradient(#fefefe, #efefef);
}
.foglio {
    flex: 1;
    padding: 93px 53px 0 94px;
    border: 1px solid #c6c6c6;
    border-bottom: none;
    background: #fff;
    color: #000;
    font-family: "Liberation Sans", Arial, sans-serif;
    text-align: center;
}
.riquadro {
    height: 71px;
    position: relative;
    display: flex;
    flex-direction: column;
    padding-top: 14px;
    border: 1px dashed #999;
    border-top: 1px solid #000;
    border-bottom: 1px solid #000;
    font-size: 15px;
    line-height: 20px;
}
.riquadro strong {
    font-size: 19px;
}
.sposta {
    position: absolute;
    left: -13px;
    top: -14px;
}
.maniglia {
    position: absolute;
    right: -9px;
    bottom: -9px;
    width: 8px;
    height: 8px;
    border: 1px solid #999;
    background: #fff;
}
.cursore-testo {
    position: absolute;
    left: 50%;
    top: 0;
    width: 1px;
    height: 14px;
    background: #000;
}
.testo {
    padding: 133px 40px 0 0;
    white-space: nowrap;
}
.testo h1, .decreto, .attestante {
    color: #003f7d;
    font-weight: bold;
}
.testo h1 {
    font-size: 24px;
    line-height: 32px;
}
.decreto {
    font-size: 12px;
    line-height: 16px;
}
.decreto b {
    font-size: 17px;
    line-height: 12px;
}
.attestante {
    font-size: 17px;
    line-height: 20px;
}
.nuove {
    padding-top: 43px;
    font-size: 19px;
    line-height: 21px;
    font-style: italic;
}
.allegato {
    font-size: 12px;
    line-height: 12px;
    font-style: italic;
}

.word-stato {
    margin: 0 -1px -1px;
    height: 23px;
    flex: none;
    display: flex;
    align-items: stretch;
    gap: 18px;
    padding: 0 19px 0 8px;
    background: #2b579a;
    color: #fff;
    font-size: 11px;
    line-height: 21px;
}
.viste {
    margin-left: auto;
    display: flex;
}
.viste button {
    width: 38px;
}
.viste .attiva {
    background: #1d4580;
}
.zoom {
    display: flex;
    align-items: center;
    margin-left: -14px;
}
.zoom input {
    appearance: none;
    width: 100px;
    height: 11px;
    margin: 0 4px 0 3px;
    background: linear-gradient(#fff, #fff) center / 100% 1px no-repeat;
}
.zoom input::-webkit-slider-thumb {
    appearance: none;
    width: 4px;
    height: 11px;
    background: #fff;
}
.zoom span {
    margin-left: 16px;
}
```
